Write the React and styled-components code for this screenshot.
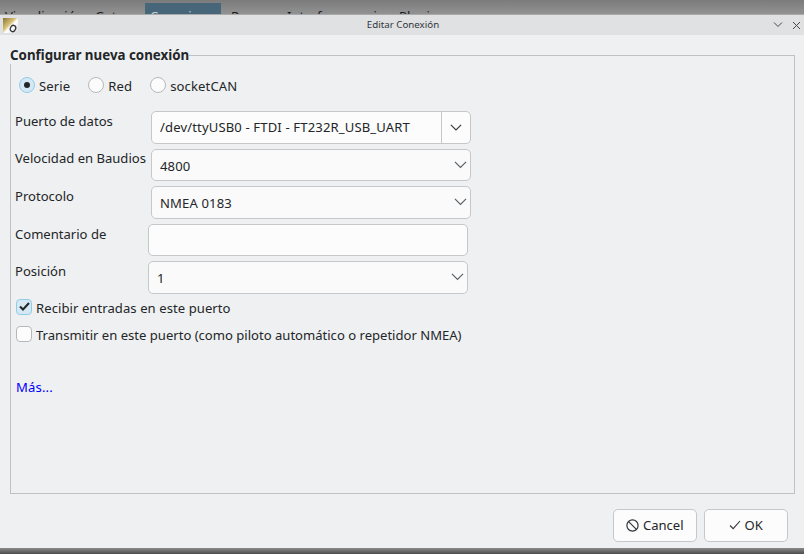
import React from "react";
import styled, { createGlobalStyle } from "styled-components";

const Global = createGlobalStyle`
  html, body { margin: 0; padding: 0; width: 804px; height: 554px; overflow: hidden; background: #6f6f6f; }
  * { box-sizing: border-box; }
  body { font-family: "Noto Sans", sans-serif; font-size: 13.07px; color: #232629; }
`;

const Page = styled.div`
  width: 804px;
  height: 554px;
  display: flex;
  flex-direction: column;
  overflow: hidden;
`;

const BackMenu = styled.div`
  height: 14px;
  flex: none;
  display: flex;
  overflow: hidden;
  background: linear-gradient(#7b7b7b, #929292);
  color: #1b1b1b;
  padding: 3px 0 0 5px;
  white-space: nowrap;
`;

const BackItem = styled.span`
  display: block;
  height: 11px;
  padding-top: 2px;
  line-height: 22px;
  width: ${(p) => p.$w}px;
  flex: none;
  padding-left: ${(p) => p.$pad || 0}px;
  background: ${(p) => (p.$active ? "#47667a" : "transparent")};
  color: ${(p) => (p.$active ? "#c8d0d6" : "inherit")};
`;

const Dialog = styled.div`
  flex: 1;
  display: flex;
  flex-direction: column;
  min-height: 0;
  background: #eff0f1;
  border-top: 1px solid #a9aaab;
`;

const TitleBar = styled.div`
  height: 20px;
  flex: none;
  display: flex;
  align-items: center;
  position: relative;
  background: #dfe1e3;
`;

const AppIcon = styled.svg`
  width: 15px;
  height: 15px;
  margin-left: 3px;
  flex: none;
`;

const Title = styled.div`
  position: absolute;
  left: 0;
  right: 0;
  top: 2px;
  text-align: center;
  font-size: 9.75px;
  line-height: 16px;
  color: #31363b;
  padding-left: 2px;
`;

const WinButtons = styled.div`
  margin-left: auto;
  display: flex;
  gap: 9px;
  padding-right: 3px;
  align-items: center;
`;

const Content = styled.div`
  flex: 1;
  min-height: 0;
  display: flex;
  flex-direction: column;
  padding: 11px 9px 0 10px;
`;

const Group = styled.fieldset`
  margin: 0;
  padding: 12px 0 0 4px;
  min-width: 0;
  height: 448px;
  flex: none;
  border: 1px solid #bfc1c3;
  border-radius: 0;
`;

const Legend = styled.legend`
  padding: 0;
  margin-left: -5px;
  font-weight: 700;
  font-size: 13.33px;
  line-height: 18px;
  color: #232629;
`;

const RadioRow = styled.div`
  display: flex;
  height: 20px;
  align-items: center;
  padding-left: 4px;
  margin-bottom: 15px;
  letter-spacing: 0.12px;
`;

const RadioLabel = styled.label`
  display: flex;
  align-items: center;
  gap: 4px;
  margin-right: 18px;
`;

const RadioDot = styled.span`
  width: 16px;
  height: 16px;
  margin-bottom: 2px;
  border-radius: 50%;
  flex: none;
  display: flex;
  align-items: center;
  justify-content: center;
  border: 1px solid ${(p) => (p.$on ? "#93cbe9" : "#b6b8ba")};
  background: ${(p) => (p.$on ? "#d5e9f5" : "#fcfcfc")};
  &::after {
    content: "";
    display: ${(p) => (p.$on ? "block" : "none")};
    width: 6px;
    height: 6px;
    border-radius: 50%;
    background: #232629;
  }
`;

const Rows = styled.div`
  display: flex;
  flex-direction: column;
  gap: 5px;
`;

const Row = styled.div`
  display: flex;
  height: 32.5px;
`;

const FieldLabel = styled.div`
  width: ${(p) => p.$w}px;
  flex: none;
  padding-top: ${(p) => p.$top ?? 1}px;
  line-height: 18px;
  white-space: nowrap;
`;

const Field = styled.div`
  width: 320px;
  height: 100%;
  display: flex;
  align-items: center;
  border: 1px solid #c5c7c9;
  border-radius: 5px;
  background: ${(p) => (p.$plain ? "#fcfcfc" : "#fafafa")};
  padding-left: 8px;
`;

const FieldText = styled.span`
  flex: 1;
  line-height: 18px;
  letter-spacing: 0.14px;
  padding-top: ${(p) => p.$top || 0}px;
`;

const ArrowCell = styled.span`
  width: ${(p) => p.$w}px;
  height: 100%;
  flex: none;
  display: flex;
  align-items: center;
  justify-content: center;
  border-left: ${(p) => (p.$split ? "1px solid #c5c7c9" : "none")};
`;

const CheckRow = styled.label`
  display: flex;
  align-items: center;
  gap: 4px;
  height: 18px;
  padding-left: 1px;
  margin-top: ${(p) => p.$mt}px;
  letter-spacing: ${(p) => p.$ls || 0}px;
`;

const CheckBox = styled.span`
  width: 16px;
  height: 16px;
  margin-bottom: 2px;
  flex: none;
  border-radius: 4px;
  display: flex;
  align-items: center;
  justify-content: center;
  border: 1px solid ${(p) => (p.$on ? "#93cbe9" : "#b6b8ba")};
  background: ${(p) => (p.$on ? "#d5e9f5" : "#fcfcfc")};
`;

const MoreLink = styled.a`
  display: block;
  margin: 34px 0 0 1px;
  line-height: 18px;
  letter-spacing: 0.15px;
  color: #0000ff;
`;

const Footer = styled.div`
  display: flex;
  justify-content: flex-end;
  gap: 6.5px;
  padding: 15px 7px 0 0;
`;

const Button = styled.button`
  width: 84.5px;
  height: 32.5px;
  display: flex;
  align-items: center;
  justify-content: center;
  gap: 4px;
  padding: 0;
  border: 1px solid #c5c7c9;
  border-radius: 5px;
  background: #fcfcfc;
  font: inherit;
  color: #232629;
`;

const BottomEdge = styled.div`
  height: 6px;
  flex: none;
  background: linear-gradient(#8b8b8b, #4c4c4c);
`;

const Chevron = ({ size = 13, color = "#31363b" }) => (
  <svg width={size} height={size * 0.6} viewBox="0 0 14 8.4" fill="none" stroke={color} strokeWidth="1.3">
    <path d="M1 1 L7 7 L13 1" />
  </svg>
);

export default function App() {
  return (
    <Page>
      <Global />
      <BackMenu>
        <BackItem $w={90}>Visualización</BackItem>
        <BackItem $w={50}>Gatos</BackItem>
        <BackItem $w={76} $active $pad={5}>Conexiones</BackItem>
        <BackItem $w={10} />
        <BackItem $w={56}>Ruanes</BackItem>
        <BackItem $w={112}>Interfaz usuario</BackItem>
        <BackItem $w={50}>Plugins</BackItem>
      </BackMenu>
      <Dialog>
        <TitleBar>
          <AppIcon viewBox="0 0 15 15">
            <defs>
              <linearGradient id="appg" x1="0" y1="0" x2="1" y2="1">
                <stop offset="0" stopColor="#8a7330" />
                <stop offset="0.42" stopColor="#d9c27a" />
                <stop offset="0.55" stopColor="#ffffff" />
                <stop offset="1" stopColor="#d7dde0" />
              </linearGradient>
            </defs>
            <rect width="15" height="15" fill="url(#appg)" />
            <ellipse cx="10" cy="10.5" rx="2.6" ry="3.2" fill="none" stroke="#333" strokeWidth="1.3" transform="rotate(25 10 10.5)" />
          </AppIcon>
          <Title>Editar Conexión</Title>
          <WinButtons>
            <svg width="10" height="6" viewBox="0 0 10 6" fill="none" stroke="#44494d" strokeWidth="1">
              <path d="M1 .5 L5 4.5 L9 .5" />
            </svg>
            <svg width="9" height="9" viewBox="0 0 9 9" fill="none" stroke="#44494d" strokeWidth="1">
              <path d="M1 1 L8 8 M8 1 L1 8" />
            </svg>
          </WinButtons>
        </TitleBar>
        <Content>
          <Group>
            <Legend>Configurar nueva conexión</Legend>
            <RadioRow>
              <RadioLabel><RadioDot $on />Serie</RadioLabel>
              <RadioLabel><RadioDot />Red</RadioLabel>
              <RadioLabel><RadioDot />socketCAN</RadioLabel>
            </RadioRow>
            <Rows>
              <Row>
                <FieldLabel $w={136}>Puerto de datos</FieldLabel>
                <Field $plain>
                  <FieldText>/dev/ttyUSB0 - FTDI - FT232R_USB_UART</FieldText>
                  <ArrowCell $w={29} $split><Chevron size={12} /></ArrowCell>
                </Field>
              </Row>
              <Row>
                <FieldLabel $w={136} $top={0}>Velocidad en Baudios</FieldLabel>
                <Field>
                  <FieldText $top={2}>4800</FieldText>
                  <ArrowCell $w={20}><Chevron color="#5a5f64" /></ArrowCell>
                </Field>
              </Row>
              <Row>
                <FieldLabel $w={136}>Protocolo</FieldLabel>
                <Field>
                  <FieldText $top={2}>NMEA 0183</FieldText>
                  <ArrowCell $w={20}><Chevron color="#5a5f64" /></ArrowCell>
                </Field>
              </Row>
              <Row>
                <FieldLabel $w={133}>Comentario de</FieldLabel>
                <Field $plain />
              </Row>
              <Row>
                <FieldLabel $w={133}>Posición</FieldLabel>
                <Field>
                  <FieldText $top={2}>1</FieldText>
                  <ArrowCell $w={20}><Chevron color="#5a5f64" /></ArrowCell>
                </Field>
              </Row>
            </Rows>
            <CheckRow $mt={5} $ls={0.07}>
              <CheckBox $on>
                <svg width="11" height="9" viewBox="0 0 11 9" fill="none" stroke="#232629" strokeWidth="2">
                  <path d="M1 4.5 L4 7.5 L10 1" />
                </svg>
              </CheckBox>
              Recibir entradas en este puerto
            </CheckRow>
            <CheckRow $mt={9}>
              <CheckBox />
              Transmitir en este puerto (como piloto automático o repetidor NMEA)
            </CheckRow>
            <MoreLink>Más...</MoreLink>
          </Group>
          <Footer>
            <Button>
              <svg width="13" height="13" viewBox="0 0 13 13" fill="none" stroke="#31363b" strokeWidth="1.2">
                <circle cx="6.5" cy="6.5" r="5.6" />
                <path d="M2.6 2.6 L10.4 10.4" />
              </svg>
              Cancel
            </Button>
            <Button>
              <svg width="12" height="10" viewBox="0 0 12 10" fill="none" stroke="#31363b" strokeWidth="1.1">
                <path d="M1 5.5 L4.2 8.7 L11 1" />
              </svg>
              OK
            </Button>
          </Footer>
        </Content>
        <BottomEdge />
      </Dialog>
    </Page>
  );
}
